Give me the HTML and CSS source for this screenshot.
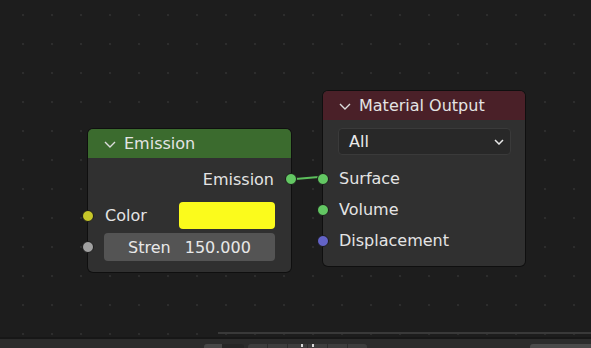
FILE: index.html
```html
<!DOCTYPE html>
<html lang="en">
<head>
    <meta charset="UTF-8">
    <title>Node Editor</title>
    <link rel="stylesheet" href="styles.css">
</head>
<body>
    <div class="editor">
        <div class="canvas">
            <svg class="link" width="36" height="14" viewBox="0 0 36 14">
                <path d="M1 8 C 14 8, 20 6, 33 6" fill="none" stroke="#5cbf5c" stroke-width="2"/>
            </svg>

            <div class="node node-emission">
                <div class="node-header">
                    <svg class="chevron" width="12" height="7" viewBox="0 0 12 7"><path d="M1 1 L6 6 L11 1" fill="none" stroke="#dcdcdc" stroke-width="1.4"/></svg>
                    <span>Emission</span>
                </div>
                <div class="node-body">
                    <div class="row row-output">
                        <span>Emission</span>
                        <i class="socket socket-out socket-green"></i>
                    </div>
                    <div class="row row-color">
                        <i class="socket socket-in socket-yellow"></i>
                        <span>Color</span>
                        <div class="swatch"></div>
                    </div>
                    <div class="row row-field">
                        <i class="socket socket-in socket-gray"></i>
                        <div class="field">
                            <span>Stren</span>
                            <span>150.000</span>
                        </div>
                    </div>
                </div>
            </div>

            <div class="node node-output">
                <div class="node-header">
                    <svg class="chevron" width="12" height="7" viewBox="0 0 12 7"><path d="M1 1 L6 6 L11 1" fill="none" stroke="#dcdcdc" stroke-width="1.4"/></svg>
                    <span>Material Output</span>
                </div>
                <div class="node-body">
                    <div class="dropdown">
                        <span>All</span>
                        <svg width="10" height="6" viewBox="0 0 10 6"><path d="M1 1 L5 5 L9 1" fill="none" stroke="#e8e8e8" stroke-width="1.5"/></svg>
                    </div>
                    <div class="row row-input">
                        <i class="socket socket-in socket-green"></i>
                        <span>Surface</span>
                    </div>
                    <div class="row row-input">
                        <i class="socket socket-in socket-green"></i>
                        <span>Volume</span>
                    </div>
                    <div class="row row-input">
                        <i class="socket socket-in socket-purple"></i>
                        <span>Displacement</span>
                    </div>
                </div>
            </div>

            <div class="scrollbar"></div>
        </div>
        <div class="footer">
            <div class="btn btn-light"></div>
            <div class="btn btn-dark"></div>
            <div class="btn-group">
                <div class="btn"></div>
                <div class="btn"></div>
                <div class="btn btn-icon"></div>
                <div class="btn btn-icon2"></div>
                <div class="btn"></div>
                <div class="btn"></div>
            </div>
            <div class="btn btn-right"></div>
        </div>
    </div>
</body>
</html>
```

FILE: styles.css
```css
html, body {
    margin: 0;
    padding: 0;
    background-color: #1d1d1d;
}
body {
    font-family: "DejaVu Sans", sans-serif;
    font-size: 16px;
    color: #e4e4e4;
}
.editor {
    width: 591px;
    height: 348px;
    display: flex;
    flex-direction: column;
    overflow: hidden;
}
.canvas {
    position: relative;
    height: 337px;
    flex-shrink: 0;
    background-color: #1d1d1d;
    background-image: radial-gradient(circle at 1px 1px, #2d2d2d 1px, transparent 1.6px);
    background-size: 29px 29px;
    background-position: 22px 14px;
    border-bottom: 2px solid #171717;
}
.link {
    position: absolute;
    left: 290px;
    top: 171px;
}
.node {
    position: absolute;
    background-color: #303030;
    border-radius: 5px;
    box-shadow: 0 0 0 1px rgba(0, 0, 0, 0.45);
}
.node-emission {
    left: 88px;
    top: 129px;
    width: 203px;
    height: 143px;
}
.node-output {
    left: 323px;
    top: 91px;
    width: 202px;
    height: 175px;
}
.node-header {
    height: 29px;
    display: flex;
    align-items: center;
    padding-left: 16px;
    border-radius: 5px 5px 0 0;
}
.node-header .chevron {
    margin-right: 8px;
    margin-top: 2px;
}
.node-emission .node-header {
    background-color: #3b6b2e;
}
.node-output .node-header {
    background-color: #4a2028;
}
.node-emission .node-body {
    padding: 8px 16px 0 17px;
}
.row {
    position: relative;
    display: flex;
    align-items: center;
}
.row-output {
    height: 26px;
    justify-content: flex-end;
    padding-right: 1px;
}
.row-color {
    height: 27px;
    margin-top: 10px;
    justify-content: space-between;
}
.row-field {
    height: 28px;
    margin-top: 4px;
}
.swatch {
    width: 96px;
    height: 27px;
    border-radius: 4px;
    background-color: #fbfb1c;
}
.field {
    flex: 1;
    height: 28px;
    margin-left: -1px;
    border-radius: 4px;
    background-color: #545454;
    display: flex;
    align-items: center;
    justify-content: center;
    gap: 14px;
    color: #e8e8e8;
}
.socket {
    position: absolute;
    width: 10px;
    height: 10px;
    border-radius: 50%;
    border: 1px solid #1a1a1a;
    top: 50%;
    margin-top: -6px;
}
.node-emission .socket-in {
    left: -23px;
}
.node-emission .socket-out {
    right: -22px;
}
.socket-green {
    background-color: #63c763;
}
.socket-yellow {
    background-color: #c7c729;
}
.socket-gray {
    background-color: #a1a1a1;
}
.socket-purple {
    background-color: #6363c7;
}
.node-output .node-body {
    padding: 8px 14px 0 15px;
}
.dropdown {
    height: 25px;
    border: 1px solid #3a3a3a;
    border-radius: 4px;
    background-color: #282828;
    display: flex;
    align-items: center;
    justify-content: space-between;
    padding: 0 6px 0 10px;
    color: #eaeaea;
}
.row-input {
    height: 31px;
    padding-left: 1px;
}
.dropdown + .row-input {
    margin-top: 8px;
}
.node-output .socket-in {
    left: -21px;
}
.scrollbar {
    position: absolute;
    left: 218px;
    right: 0;
    top: 332px;
    height: 2px;
    background-color: #393939;
}
.footer {
    flex: 1;
    background-color: #2c2c2c;
    display: flex;
    align-items: flex-start;
    padding-top: 5px;
}
.btn {
    height: 20px;
    width: 20px;
    border-radius: 3px;
    background-color: #3d3d3d;
}
.btn-light {
    margin-left: 204px;
    width: 18px;
    background-color: #474747;
    border-radius: 3px 0 0 3px;
}
.btn-dark {
    width: 22px;
    background-color: #262626;
    border-radius: 0 3px 3px 0;
}
.btn-group {
    display: flex;
    gap: 1px;
    margin-left: 4px;
}
.btn-group .btn {
    width: 19px;
    border-radius: 0;
}
.btn-group .btn:first-child {
    border-radius: 3px 0 0 3px;
}
.btn-group .btn:last-child {
    border-radius: 0 3px 3px 0;
}
.btn-icon, .btn-icon2 {
    position: relative;
}
.btn-icon::after, .btn-icon2::after {
    content: "";
    position: absolute;
    top: 0;
    width: 2px;
    height: 3px;
    background-color: #d8d8d8;
}
.btn-icon::after {
    left: 13px;
}
.btn-icon2::after {
    left: 4px;
}
.btn-right {
    margin-left: auto;
    width: 61px;
    background-color: #4a4a4a;
    border-radius: 3px 0 0 3px;
}
```
